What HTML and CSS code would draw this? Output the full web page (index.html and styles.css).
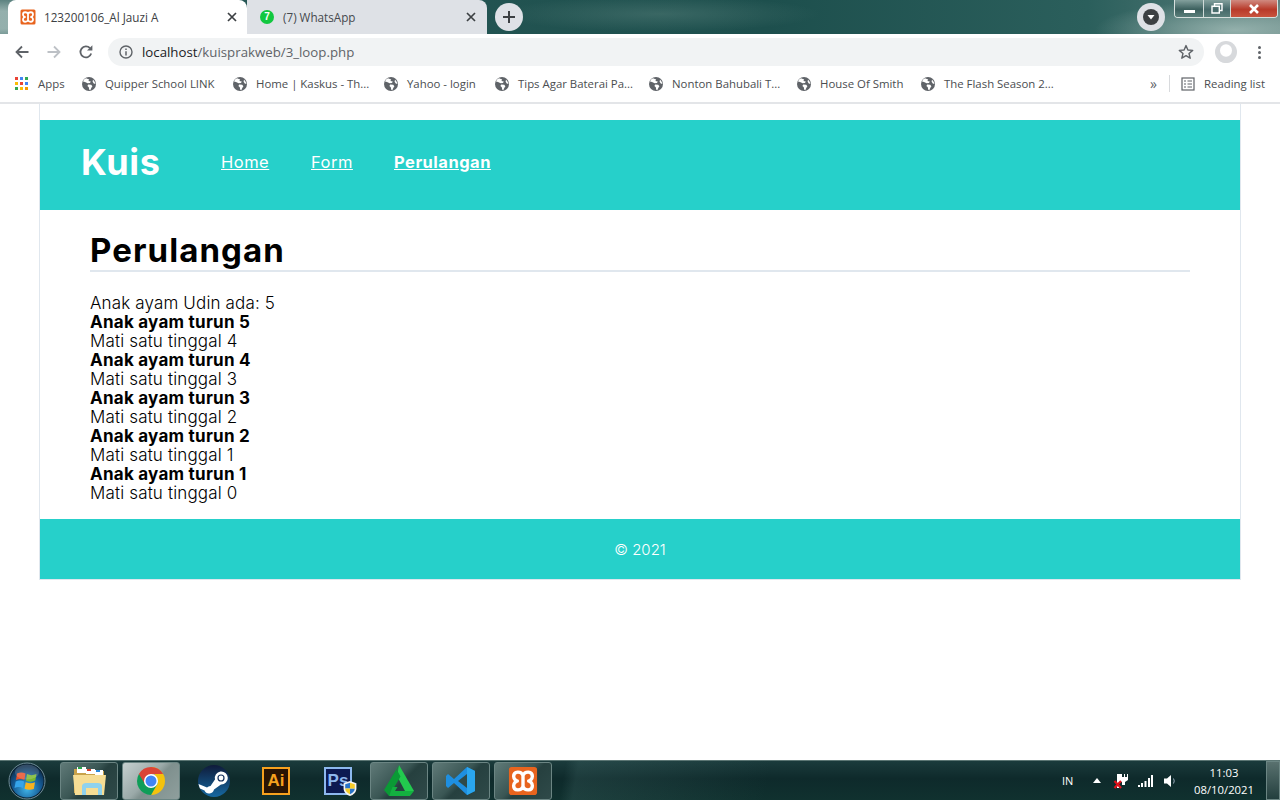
FILE: index.html
```html
<!DOCTYPE html>
<html lang="id">
<head>
<meta charset="utf-8">
<title>123200106_Al Jauzi A</title>
<link rel="stylesheet" href="styles.css">
</head>
<body>
<svg class="defs" width="0" height="0" aria-hidden="true">
  <defs>
    <symbol id="xampp" viewBox="0 0 16 16">
      <rect x="0.5" y="0.5" width="15" height="15" rx="1.5" fill="#e8641e"/>
      <path d="M8 5C7 2.600 3 2.600 3 5.500 3 7 4.500 8 5 8 4.500 8 3 9 3 10.500 3 13.400 7 13.400 8 11 9 13.400 13 13.400 13 10.500 13 9 11.500 8 11 8 11.500 8 13 7 13 5.500 13 2.600 9 2.600 8 5zM8 5V11" fill="none" stroke="#fff" stroke-width="1.800" stroke-linejoin="round"/>
    </symbol>
    <symbol id="globe" viewBox="0 0 16 16">
      <circle cx="8" cy="8" r="7" fill="#5f6368"/>
      <path d="M5 2.200 8.200 3.400 7.400 5 9.800 5.400 9 7 6.600 7.200 4 6 2 5.400 3 3.600zM7.200 8.400l3 .4 1.200 1.400-1 1.600-1 2.200-1.200-.2-.4-2.600-1.400-1.200zM12 3.600l1.800 2.400.6 2-1.600-.6-1.200-1.600z" fill="#fff"/>
    </symbol>
  </defs>
</svg>

<div class="screen">
  <header class="tabstrip">
    <div class="tab tab-active">
      <svg class="fav"><use href="#xampp"/></svg>
      <span class="tab-title">123200106_Al Jauzi A</span>
      <svg class="tab-x" viewBox="0 0 10 10"><path d="M1 1 9 9M9 1 1 9"/></svg>
    </div>
    <div class="tab tab-idle">
      <span class="wa">7</span>
      <span class="tab-title">(7) WhatsApp</span>
      <svg class="tab-x" viewBox="0 0 10 10"><path d="M1 1 9 9M9 1 1 9"/></svg>
    </div>
    <div class="newtab"><svg viewBox="0 0 12 12"><path d="M6 0V12M0 6H12"/></svg></div>
    <div class="strip-fill"></div>
    <div class="dl"><span class="dl-in"><svg viewBox="0 0 10 10"><path d="M1.500 3h7L5 7.500z" fill="#fff"/></svg></span></div>
    <div class="winctl">
      <span class="wb wb-min"><i></i></span>
      <span class="wb wb-max"><svg viewBox="0 0 12 11"><path d="M3.500 3V.8H11V7.500H8.500M1 3.200H8.300V10H1z" fill="none" stroke="#fff" stroke-width="1.400"/></svg></span>
      <span class="wb wb-close"><svg viewBox="0 0 14 10"><path d="M3 1 11 9M11 1 3 9" stroke="#fff" stroke-width="2.600" fill="none"/></svg></span>
    </div>
  </header>

  <nav class="toolbar">
    <svg class="tool" viewBox="0 0 16 16"><path d="M14.500 8H2.500M8 2.500 2.500 8 8 13.500" fill="none" stroke="#5f6368" stroke-width="1.800"/></svg>
    <svg class="tool" viewBox="0 0 16 16"><path d="M1.500 8H13.500M8 2.500 13.500 8 8 13.500" fill="none" stroke="#bdc1c6" stroke-width="1.800"/></svg>
    <svg class="tool" viewBox="0 0 16 16"><path d="M13.200 9.600A5.500 5.500 0 1 1 12 4.200" fill="none" stroke="#5f6368" stroke-width="1.800"/><path d="M14.400 1.200V6.600H9z" fill="#5f6368"/></svg>
    <div class="omnibox">
      <svg class="info" viewBox="0 0 14 14"><circle cx="7" cy="7" r="6" fill="none" stroke="#5f6368" stroke-width="1.400"/><path d="M7 6.200V10.400M7 3.600V5" stroke="#5f6368" stroke-width="1.500"/></svg>
      <span class="url"><span class="url-host">localhost</span>/kuisprakweb/3_loop.php</span>
      <svg class="star" viewBox="0 0 16 16"><path d="M8 1.600 9.900 6 14.700 6.400 11 9.500 12.200 14.200 8 11.700 3.800 14.200 5 9.500 1.300 6.400 6.100 6z" fill="none" stroke="#5f6368" stroke-width="1.400" stroke-linejoin="round"/></svg>
    </div>
    <svg class="avatar" viewBox="0 0 22 22"><circle cx="11" cy="11" r="11" fill="#d7d9dc"/><ellipse cx="11" cy="9.500" rx="6" ry="6.200" fill="#fff"/><path d="M3.600 19C6 15 16 15 18.400 19 14 23 8 23 3.600 19z" fill="#d7d9dc"/></svg>
    <span class="dots"><i></i><i></i><i></i></span>
  </nav>

  <nav class="bookmarks">
    <div class="bm-grid">
      <span class="bm">
        <svg class="apps" viewBox="0 0 13 13">
          <rect x="0" y="0" width="3" height="3" fill="#ea4335"/><rect x="5" y="0" width="3" height="3" fill="#4285f4"/><rect x="10" y="0" width="3" height="3" fill="#34a853"/>
          <rect x="0" y="5" width="3" height="3" fill="#fbbc05"/><rect x="5" y="5" width="3" height="3" fill="#ea4335"/><rect x="10" y="5" width="3" height="3" fill="#4285f4"/>
          <rect x="0" y="10" width="3" height="3" fill="#34a853"/><rect x="5" y="10" width="3" height="3" fill="#fbbc05"/><rect x="10" y="10" width="3" height="3" fill="#f29900"/>
        </svg>Apps</span>
      <span class="bm"><svg class="globe"><use href="#globe"/></svg>Quipper School LINK</span>
      <span class="bm"><svg class="globe"><use href="#globe"/></svg>Home | Kaskus - Th...</span>
      <span class="bm"><svg class="globe"><use href="#globe"/></svg>Yahoo - login</span>
      <span class="bm"><svg class="globe"><use href="#globe"/></svg>Tips Agar Baterai Pa...</span>
      <span class="bm"><svg class="globe"><use href="#globe"/></svg>Nonton Bahubali T...</span>
      <span class="bm"><svg class="globe"><use href="#globe"/></svg>House Of Smith</span>
      <span class="bm"><svg class="globe"><use href="#globe"/></svg>The Flash Season 2...</span>
    </div>
    <span class="more">»</span>
    <span class="bm-sep"></span>
    <svg class="reading" viewBox="0 0 14 14"><rect x="1" y="1" width="12" height="12" fill="none" stroke="#5f6368" stroke-width="1.200"/><path d="M3 4H5M6.500 4H11M3 7H5M6.500 7H11M3 10H5M6.500 10H11" stroke="#5f6368" stroke-width="1.200"/></svg>
    <span class="bm-text">Reading list</span>
  </nav>

  <div class="viewport">
    <div class="wrap">
      <header class="site-head">
        <span class="brand">Kuis</span>
        <a class="nav-link nav-home" href="#">Home</a>
        <a class="nav-link nav-form" href="#">Form</a>
        <a class="nav-link nav-current" href="#">Perulangan</a>
      </header>
      <main class="content">
        <h1 class="title">Perulangan</h1>
        <div class="output">
          <div>Anak ayam Udin ada: 5</div>
          <div class="b">Anak ayam turun 5</div>
          <div>Mati satu tinggal 4</div>
          <div class="b">Anak ayam turun 4</div>
          <div>Mati satu tinggal 3</div>
          <div class="b">Anak ayam turun 3</div>
          <div>Mati satu tinggal 2</div>
          <div class="b">Anak ayam turun 2</div>
          <div>Mati satu tinggal 1</div>
          <div class="b">Anak ayam turun 1</div>
          <div>Mati satu tinggal 0</div>
        </div>
      </main>
      <footer class="site-foot">© 2021</footer>
    </div>
  </div>

  <footer class="taskbar">
    <svg class="orb" viewBox="0 0 38 38">
      <defs>
        <radialGradient id="orbg" cx="50%" cy="75%" r="70%"><stop offset="0" stop-color="#3fb4e8"/><stop offset="0.6" stop-color="#155a94"/><stop offset="1" stop-color="#0c2c4c"/></radialGradient>
      </defs>
      <circle cx="19" cy="19" r="18" fill="#0a2230" stroke="#6f8d99" stroke-width="1"/>
      <circle cx="19" cy="19" r="16.500" fill="url(#orbg)"/>
      <path d="M9 11.500C12 10 14.500 10 17.500 11.500L16.400 18C13.500 16.600 11 16.600 8 18z" fill="#e8502a"/>
      <path d="M19 12C22 13.500 25 13.500 28.500 12L27.300 18.600C24.500 20 21.500 20 18 18.800z" fill="#7ab82e"/>
      <path d="M7.700 19.500C10.700 18 13 18 16.100 19.500L15 26C12 24.500 9.500 24.500 6.500 26z" fill="#35a4ea"/>
      <path d="M17.700 20.300C21 21.500 24 21.500 27 20.300L25.800 27C22.800 28 19.800 28 16.600 26.800z" fill="#f7b21e"/>
      <ellipse cx="19" cy="10" rx="12" ry="7.500" fill="#fff" opacity="0.16"/>
    </svg>

    <span class="tb tb-first">
      <svg class="ti ti-folder" viewBox="0 0 36 32">
        <path d="M3 4H14L16 6H33V28H3z" fill="#c9a24a"/>
        <rect x="6" y="2" width="9" height="6" fill="#fff"/><rect x="7" y="2" width="4" height="2" fill="#2aa84a"/>
        <rect x="15" y="4" width="9" height="5" fill="#fff"/><rect x="16" y="4" width="4" height="2" fill="#d8402a"/>
        <rect x="24" y="5" width="8" height="5" fill="#fff"/><rect x="25" y="5" width="4" height="2" fill="#2a88d8"/>
        <path d="M2 10H35L33 30H4z" fill="#f6dd94"/>
        <path d="M11 30V21C11 19 13 18 15 18H27C29 18 31 19 31 21V30H27V23H15V30z" fill="#8fd2ee"/>
      </svg>
    </span>
    <span class="tb tb-on">
      <svg class="ti" viewBox="0 0 32 32">
        <path d="M16 2A14 14 0 0 1 16 30L23 16z" fill="#f4c20d"/>
        <path d="M3.900 9A14 14 0 0 0 16 30L23 18z" fill="#0f9d58"/>
        <path d="M16 2A14 14 0 0 0 3.900 9L10 19 16 9H28.100A14 14 0 0 0 16 2z" fill="#db4437"/>
        <circle cx="16" cy="16" r="7" fill="#fff"/>
        <circle cx="16" cy="16" r="5.500" fill="#4285f4"/>
      </svg>
    </span>
    <span class="plain plain-steam">
      <svg class="ti" viewBox="0 0 32 32">
        <defs><linearGradient id="stg" x1="0" y1="0" x2="0" y2="1"><stop offset="0" stop-color="#0f1b3a"/><stop offset="1" stop-color="#1668a0"/></linearGradient></defs>
        <circle cx="16" cy="16" r="16" fill="url(#stg)"/>
        <path d="M0.500 19 9 22.500A5 5 0 0 1 12.500 21L17 14.500A6.500 6.500 0 1 1 23 19.500L16 24.500A5 5 0 0 1 6.500 25.500L2 23.500A16 16 0 0 1 .5 19z" fill="#fff"/>
        <circle cx="23" cy="13" r="3.600" fill="#14305c"/><circle cx="23" cy="13" r="2.400" fill="#fff"/>
      </svg>
    </span>
    <span class="plain plain-ai"><span class="ai">Ai</span></span>
    <span class="plain plain-ps">
      <span class="ps">Ps</span>
      <svg class="shield" viewBox="0 0 12 14"><path d="M6 .5 11.500 2.500V7C11.500 10 9 12.500 6 13.500 3 12.500.5 10 .5 7V2.500z" fill="#f4f4f4"/><path d="M6 2 1.900 3.400V7H6zM6 7V12C8 11 10.100 9.500 10.100 7z" fill="#2a74c8"/><path d="M6 2V7H10.100V3.400zM6 7H1.900C1.900 9.500 4 11 6 12z" fill="#f6cc2a"/></svg>
    </span>
    <span class="tb">
      <svg class="ti ti-large" viewBox="0 0 32 32">
        <path d="M16 0 31 26H22L14 11z" fill="#22c94e"/>
        <path d="M16 0 1 25 6 31 17.500 11.500 14 5z" fill="#0a9a35"/>
        <path d="M6 31H27L31 26H12L14.500 22H9.500z" fill="#13b040"/>
      </svg>
    </span>
    <span class="tb">
      <svg class="ti" viewBox="0 0 32 32">
        <path d="M22 2 30 6V26L22 30 9 18 3 23 1 21V11L3 9 9 14z" fill="#1e8fe0"/>
        <path d="M22 9 13 16 22 23z" fill="#2f4a49"/>
        <path d="M22 2 30 6V26L22 30z" fill="#2aa6ee"/>
      </svg>
    </span>
    <span class="tb">
      <svg class="ti ti-x"><use href="#xampp"/></svg>
    </span>

    <div class="tray">
      <span class="tray-lang">IN</span>
      <svg class="tray-up" viewBox="0 0 8 5"><path d="M4 0 8 5H0z" fill="#fff"/></svg>
      <svg class="tray-plug" viewBox="0 0 16 16">
        <path d="M4 1H9V4H11V1H12V4H14V1H15V7L12 9V12H9V9H6V15H4z" fill="#fff"/>
        <path d="M1.500 8 8 15M8 8 1.500 15" stroke="#e0101a" stroke-width="2.200"/>
      </svg>
      <svg class="tray-sig" viewBox="0 0 15 12"><path d="M0 10h2v2H0zM3 8h2v4H3zM6.500 6h2v6h-2zM10 3h2v9h-2zM13 0h2v12h-2z" fill="#fff"/></svg>
      <svg class="tray-vol" viewBox="0 0 14 14"><path d="M1 4.500H4L8 1V13L4 9.500H1z" fill="#fff"/><path d="M10.500 4.500Q12 7 10.500 9.500" stroke="#9ab" fill="none"/></svg>
      <div class="clock"><div>11:03</div><div>08/10/2021</div></div>
      <span class="showdesk"></span>
    </div>
  </footer>
</div>
</body>
</html>
```

FILE: styles.css
```css
* { box-sizing: border-box; }
html, body { margin: 0; padding: 0; background: #fff; }
body { font-family: "Open Sans", "Noto Sans", sans-serif; }
.defs { position: absolute; }
.screen { width: 1280px; height: 800px; display: flex; flex-direction: column; overflow: hidden; }

/* tab strip */
.tabstrip {
  height: 34px; flex: none; display: flex; align-items: flex-end;
  padding-left: 8px;
  background:
    radial-gradient(ellipse 140px 30px at 1235px 30px, rgba(170,195,190,.75), transparent),
    radial-gradient(ellipse 160px 18px at 660px 14px, rgba(90,130,125,.45), transparent),
    radial-gradient(ellipse 90px 30px at 0px 20px, rgba(160,185,182,.9), rgba(160,185,182,.9) 30%, transparent),
    linear-gradient(90deg, #2a5a58, #1d4f4d 60%, #2b5f5c 85%, #5c807d);
}
.tab { height: 34px; display: flex; align-items: center; flex: none; font-size: 11.7px; color: #3c4043; }
.tab-active { width: 239px; background: #fff; border-radius: 8px 8px 0 0; padding-left: 12px; }
.tab-idle { width: 240px; background: #dee1e6; border-radius: 0 8px 0 0; padding-left: 12px; color: #45494d; }
.fav { width: 16px; height: 16px; flex: none; margin-right: 8px; }
.wa {
  width: 14px; height: 14px; flex: none; margin: 0 9px 0 1px; border-radius: 50%;
  background: #12c840; color: #fff; font: bold 10px/14px "Liberation Sans", sans-serif; text-align: center;
}
.tab-title { flex: 1; white-space: nowrap; }
.tab-x { width: 10px; height: 10px; flex: none; margin-right: 10px; stroke: #3c4043; stroke-width: 1.7; fill: none; }
.tab-idle .tab-x { margin-right: 11px; }
.newtab {
  width: 28px; height: 28px; margin: 0 0 3px 8px; border-radius: 50%; background: #dee1e6;
  display: flex; align-items: center; justify-content: center; flex: none;
}
.newtab svg { width: 12px; height: 12px; stroke: #3c4043; stroke-width: 2; }
.strip-fill { flex: 1; }
.dl {
  width: 28px; height: 28px; margin: 0 9px 3px 0; border-radius: 50%; background: #dee1e6; flex: none;
  display: flex; align-items: center; justify-content: center;
}
.dl-in { width: 16px; height: 16px; border-radius: 50%; background: #3c4043; display: flex; align-items: center; justify-content: center; }
.dl-in svg { width: 10px; height: 10px; }
.winctl {
  align-self: flex-start; width: 104px; height: 18px; margin-right: 2px; display: flex; flex: none;
  border: 1px solid #d7e0de; border-top: 0; border-radius: 0 0 4px 4px; overflow: hidden;
}
.wb { display: flex; align-items: center; justify-content: center; height: 100%; }
.wb-min { width: 29px; background: linear-gradient(#83a09d, #3c605e 55%, #5b7f7b); border-right: 1px solid #cfdad8; }
.wb-min i { width: 11px; height: 3px; background: #fff; display: block; margin-top: 5px; }
.wb-max { width: 27px; background: linear-gradient(#83a09d, #46696a 55%, #5b7f7b); border-right: 1px solid #cfdad8; }
.wb-max svg { width: 12px; height: 11px; }
.wb-close { flex: 1; background: linear-gradient(#d08a80, #b83a2a 55%, #c9543e); }
.wb-close svg { width: 14px; height: 10px; }

/* toolbar */
.toolbar { height: 34px; flex: none; background: #fff; display: flex; align-items: center; padding-left: 14px; }
.tool { width: 16px; height: 16px; flex: none; margin-right: 16px; }
.omnibox {
  width: 1096px; height: 28px; margin: 2px 0 0 -2px; border-radius: 14px; background: #f1f3f4;
  display: flex; align-items: center; padding: 0 10px 0 11px; flex: none;
}
.toolbar .tool, .avatar, .dots { margin-top: 2px; }
.info { width: 14px; height: 14px; flex: none; margin-right: 9px; }
.url { flex: 1; font-size: 13.25px; color: #5f6368; white-space: nowrap; }
.url-host { color: #202124; }
.star { width: 16px; height: 16px; flex: none; }
.avatar { width: 22px; height: 22px; flex: none; margin-left: 11px; }
.dots { display: flex; flex-direction: column; gap: 2px; margin-left: 21px; flex: none; }
.dots i { width: 3px; height: 3px; border-radius: 50%; background: #5f6368; display: block; }

/* bookmarks */
.bookmarks {
  height: 36px; flex: none; display: flex; align-items: center; background: #fff;
  border-bottom: 2px solid #e3e5e8; font-size: 11.4px; color: #4a4d50; padding-left: 15px; padding-bottom: 3px;
}
.bm-grid { display: grid; grid-template-columns: 66px 151px 151px 111px 154px 148px 124px 230px; flex: none; }
.bm { display: flex; align-items: center; white-space: nowrap; }
.apps { width: 13px; height: 13px; margin-right: 10px; flex: none; }
.globe { width: 16px; height: 16px; margin-right: 8px; flex: none; }
.more { font-size: 14px; width: 14px; color: #5f6368; text-align: left; }
.bm-sep { width: 1px; height: 17px; background: #d8dadd; margin: 0 11px 0 5px; }
.reading { width: 14px; height: 14px; margin-right: 9px; flex: none; }
.bm-text { white-space: nowrap; }

/* page */
.viewport { flex: 1; min-height: 0; background: #fff; }
.wrap {
  width: 1202px; margin-left: 39px; padding-top: 16px;
  border: solid #e0e7ee; border-width: 0 1px 1px;
  font-family: Inter, "Noto Sans", sans-serif; color: #000;
}
.site-head { height: 90px; background: #26d0ca; display: flex; align-items: center; padding: 0 0 6px 41px; }
.brand { font-size: 36px; font-weight: 700; color: #fff; line-height: 1; width: 140px; letter-spacing: .6px; }
.nav-link { color: #fff; font-size: 16.5px; letter-spacing: .5px; text-decoration: underline; }
.nav-home { width: 90px; }
.nav-form { width: 83px; }
.nav-current { font-weight: 700; }
.content { padding: 0 50px 16px; }
.title {
  margin: 0; height: 62px; padding-top: 21px; font-size: 33px; line-height: 38px; font-weight: 700;
  border-bottom: 2px solid #e0e7ee; letter-spacing: 1.1px;
}
.output { padding-top: 22px; font-size: 17px; line-height: 19px; font-weight: 300; letter-spacing: .15px; }
.output .b { font-weight: 700; letter-spacing: .25px; }
.site-foot { height: 60px; background: #26d0ca; color: #fff; display: flex; align-items: center; justify-content: center; font-size: 15px; font-weight: 300; padding-top: 1px; }

/* taskbar */
.taskbar {
  height: 40px; flex: none; display: flex; align-items: center; color: #fff;
  border-top: 1px solid #5c7674;
  background:
    linear-gradient(100deg, transparent 44%, rgba(80,120,118,.22) 45%, transparent 60%),
    linear-gradient(#1b3b3c, #0e2a2b 45%, #10312f);
}
.orb { width: 38px; height: 38px; flex: none; margin: 0 14px 0 8px; }
.tb {
  width: 58px; height: 38px; flex: none; margin-right: 4px; display: flex; align-items: center; justify-content: center;
  border: 1px solid #6b8583; border-radius: 3px;
  background: linear-gradient(135deg, #607a78, #3a5654 45%, #26403f 55%, #2f4a49);
}
.tb-on { background: linear-gradient(135deg, #c6d0cf, #9aa9a8 45%, #7f908e 55%, #8f9f9d); }
.ti { width: 32px; height: 32px; display: block; flex: none; }
.ti-folder { width: 36px; }
.ti-x { width: 30px; height: 30px; }
.plain { height: 38px; flex: none; display: flex; align-items: center; justify-content: center; position: relative; }
.plain-steam { width: 60px; }
.plain-ai { width: 64px; }
.plain-ps { width: 60px; margin-right: 2px; }
.ai {
  width: 28px; height: 28px; border: 2px solid #f7a11e; background: #2a1403; color: #f7a11e;
  font: bold 17px/24px "Liberation Sans", sans-serif; text-align: center;
}
.ps {
  width: 28px; height: 28px; border: 2px solid #8db8ee; background: #0c1a52; color: #8db8ee;
  font: bold 17px/24px "Liberation Sans", sans-serif; text-align: center;
}
.shield { position: absolute; left: 35px; top: 18px; width: 14px; height: 17px; }
.tray { margin-left: auto; display: flex; align-items: center; height: 100%; }
.tray-lang { font-size: 11px; width: 24px; margin-right: 7px; }
.tray-up { width: 8px; height: 5px; margin-right: 12px; }
.tray-plug { width: 16px; height: 16px; margin-right: 9px; }
.tray-sig { width: 15px; height: 12px; margin-right: 10px; }
.tray-vol { width: 14px; height: 14px; margin-right: 7px; }
.clock { width: 80px; text-align: center; font-size: 11.3px; line-height: 17px; margin-right: 2px; }
.showdesk { width: 14px; height: 100%; background: linear-gradient(#59716f, #233f3e); border: 1px solid #6b8583; }
```
